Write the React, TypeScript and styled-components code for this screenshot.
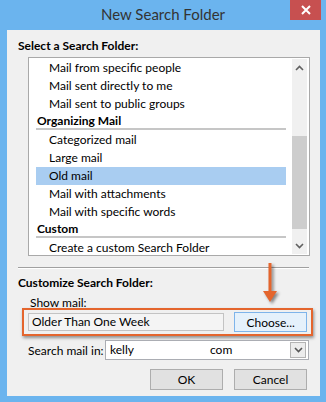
import * as React from 'react';
import styled, { createGlobalStyle } from 'styled-components';

const GlobalStyle = createGlobalStyle`
  html, body {
    margin: 0;
    padding: 0;
  }
  body {
    font-family: Lato, 'Noto Sans', sans-serif;
    font-size: 12px;
    color: #000;
  }
`;

const ORANGE = '#e4652d';

const Frame = styled.div`
  width: 326px;
  height: 402px;
  box-sizing: border-box;
  background: #6bb4ee;
  display: flex;
  flex-direction: column;
  padding: 0 6px 6px 7px;
`;

const TitleBar = styled.div`
  height: 30px;
  margin: 0 -6px 0 -7px;
  display: grid;
  grid-template-columns: 1fr auto 1fr;
  align-items: start;
`;

const Title = styled.div`
  grid-column: 2;
  font-size: 15px;
  line-height: 28px;
  color: #333;
`;

const CloseButton = styled.div`
  grid-column: 3;
  justify-self: end;
  margin-right: 5px;
  width: 31px;
  height: 20px;
  background: #c75050;
  display: flex;
  align-items: center;
  justify-content: center;
`;

const Client = styled.div`
  flex: 1;
  position: relative;
  background: #f0f0f0;
  display: flex;
  flex-direction: column;
  padding-top: 8px;
`;

const GroupLabel = styled.div`
  font-weight: bold;
  line-height: 15px;
  padding-left: 11px;
`;

const ListBox = styled.div`
  margin: 4px 0 0 21px;
  width: 282px;
  height: 199px;
  box-sizing: border-box;
  border: 1px solid #a9a9a9;
  background: #fff;
  display: flex;
  overflow: hidden;
`;

const Items = styled.div`
  flex: 1;
  padding: 1px 6px 0 7px;
  overflow: hidden;
`;

const Row = styled.div<{ $heading?: boolean; $selected?: boolean }>`
  box-sizing: border-box;
  white-space: nowrap;
  height: ${(p) => (p.$heading ? '17px' : '18px')};
  line-height: ${(p) => (p.$heading ? '15px' : '18px')};
  padding-left: ${(p) => (p.$heading ? '1px' : '13px')};
  font-weight: ${(p) => (p.$heading ? 'bold' : 'normal')};
  background: ${(p) => (p.$selected ? '#a9cdf1' : 'transparent')};
  border-bottom: ${(p) => (p.$heading ? '2px solid #c6c6c6' : 'none')};
  margin-bottom: ${(p) => (p.$heading ? '1px' : '0')};
`;

const ScrollBar = styled.div`
  width: 15px;
  margin: 1px 2px 1px 0;
  background: #f0f0f0;
  display: flex;
  flex-direction: column;
`;

const ScrollArrow = styled.div`
  height: 17px;
  display: flex;
  align-items: center;
  justify-content: center;
`;

const ScrollTrack = styled.div`
  flex: 1;
`;

const ScrollThumb = styled.div<{ $top: number; $size: number }>`
  margin-top: ${(p) => p.$top}px;
  height: ${(p) => p.$size}px;
  background: #cdcdcd;
`;

const Separator = styled.div`
  margin: 11px 11px 0 11px;
  border-top: 1px solid #a0a0a0;
  border-bottom: 1px solid #fff;
`;

const CustomizeLabel = styled(GroupLabel)`
  margin-top: 6px;
`;

const FieldLabel = styled.div<{ $indent: number; $top?: number }>`
  padding-left: ${(p) => p.$indent}px;
  margin-top: ${(p) => p.$top ?? 0}px;
  line-height: 15px;
  white-space: nowrap;
`;

const Highlight = styled.div`
  margin: -2px 0 0 15px;
  width: 291px;
  height: 28px;
  box-sizing: border-box;
  border: 2px solid ${ORANGE};
  box-shadow: 1px 2px 3px rgba(0, 0, 0, 0.4);
  display: flex;
  align-items: center;
  padding: 0 4px;
  gap: 10px;
`;

const ReadOnlyBox = styled.div`
  width: 197px;
  height: 18px;
  box-sizing: border-box;
  border: 1px solid #c3c3c3;
  background: #f4f4f4;
  padding-left: 3px;
  line-height: 16px;
  white-space: nowrap;
`;

const Button = styled.div<{ $focused?: boolean }>`
  width: 73px;
  height: ${(p) => (p.$focused ? '20px' : '21px')};
  box-sizing: border-box;
  border: 1px solid ${(p) => (p.$focused ? '#7eb4ea' : '#adadad')};
  background: ${(p) => (p.$focused ? '#e5f1fb' : '#e1e1e1')};
  display: flex;
  align-items: center;
  justify-content: center;
`;

const SearchRow = styled.div`
  margin: 4px 11px 0 21px;
  display: flex;
  align-items: center;
  justify-content: space-between;
`;

const Combo = styled.div`
  width: 204px;
  height: 20px;
  box-sizing: border-box;
  border: 1px solid #abadb3;
  background: #fff;
  display: flex;
  align-items: center;
  padding: 0 2px 0 4px;
`;

const ComboText = styled.div`
  flex: 1;
  white-space: nowrap;
  line-height: 16px;
`;

const Redacted = styled.span`
  margin-left: 76px;
`;

const ComboButton = styled.div`
  width: 16px;
  height: 16px;
  box-sizing: border-box;
  border: 1px solid #b4b4b4;
  background: #ececec;
  display: flex;
  align-items: center;
  justify-content: center;
`;

const ButtonRow = styled.div`
  margin: 9px 13px 0 0;
  display: flex;
  justify-content: flex-end;
  gap: 11px;
`;

const Pointer = styled.svg`
  position: absolute;
  left: 255px;
  top: 233px;
  filter: drop-shadow(2px 2px 1.5px rgba(0, 0, 0, 0.45));
`;

const Chevron = ({ up, color = '#606060' }: { up?: boolean; color?: string }) => (
  <svg width="9" height="6" viewBox="0 0 9 6">
    <path
      d={up ? 'M1 5 L4.5 1.5 L8 5' : 'M1 1 L4.5 4.5 L8 1'}
      fill="none"
      stroke={color}
      strokeWidth="1.6"
    />
  </svg>
);

type Entry = { label: string; heading?: boolean; selected?: boolean };

const entries: Entry[] = [
  { label: 'Mail from specific people' },
  { label: 'Mail sent directly to me' },
  { label: 'Mail sent to public groups' },
  { label: 'Organizing Mail', heading: true },
  { label: 'Categorized mail' },
  { label: 'Large mail' },
  { label: 'Old mail', selected: true },
  { label: 'Mail with attachments' },
  { label: 'Mail with specific words' },
  { label: 'Custom', heading: true },
  { label: 'Create a custom Search Folder' },
];

const App: React.FC = () => {
  return (
    <>
      <GlobalStyle />
      <Frame>
        <TitleBar>
          <Title>New Search Folder</Title>
          <CloseButton>
            <svg width="10" height="10" viewBox="0 0 10 10">
              <path d="M1 1 L9 9 M9 1 L1 9" stroke="#fff" strokeWidth="2" />
            </svg>
          </CloseButton>
        </TitleBar>
        <Client>
          <GroupLabel>Select a Search Folder:</GroupLabel>
          <ListBox>
            <Items>
              {entries.map((e) => (
                <Row key={e.label} $heading={e.heading} $selected={e.selected}>
                  {e.label}
                </Row>
              ))}
            </Items>
            <ScrollBar>
              <ScrollArrow>
                <Chevron up />
              </ScrollArrow>
              <ScrollTrack>
                <ScrollThumb $top={60} $size={93} />
              </ScrollTrack>
              <ScrollArrow>
                <Chevron />
              </ScrollArrow>
            </ScrollBar>
          </ListBox>
          <Separator />
          <CustomizeLabel>Customize Search Folder:</CustomizeLabel>
          <FieldLabel $indent={23} $top={5}>
            Show mail:
          </FieldLabel>
          <Highlight>
            <ReadOnlyBox>Older Than One Week</ReadOnlyBox>
            <Button $focused>Choose...</Button>
          </Highlight>
          <SearchRow>
            <FieldLabel $indent={0}>Search mail in:</FieldLabel>
            <Combo>
              <ComboText>
                kelly<Redacted>com</Redacted>
              </ComboText>
              <ComboButton>
                <Chevron color="#555" />
              </ComboButton>
            </Combo>
          </SearchRow>
          <ButtonRow>
            <Button>OK</Button>
            <Button>Cancel</Button>
          </ButtonRow>
          <Pointer width="22" height="44" viewBox="0 0 22 44">
            <rect x="6.5" y="0" width="3" height="30" fill={ORANGE} />
            <polygon points="1,28 15,28 8,39" fill={ORANGE} />
          </Pointer>
        </Client>
      </Frame>
    </>
  );
};

export default App;
